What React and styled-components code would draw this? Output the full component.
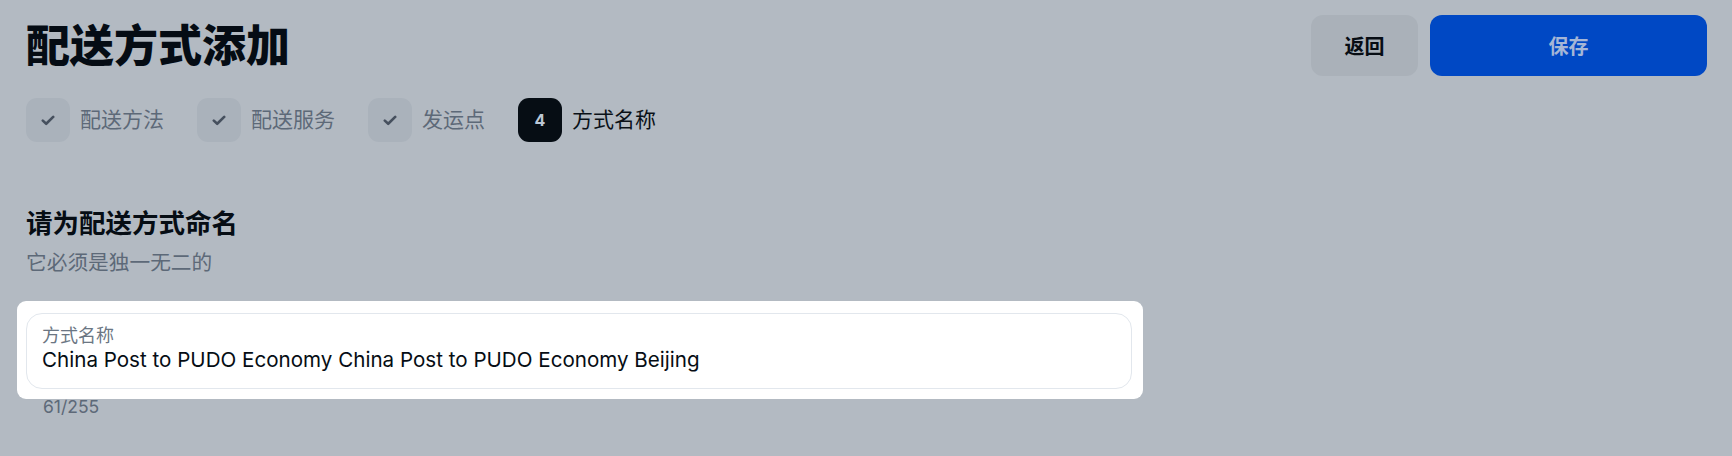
import React, { useState } from "react";
import styled, { createGlobalStyle } from "styled-components";

const GlobalStyle = createGlobalStyle`
    html, body {
        margin: 0;
        padding: 0;
        background: #b3bac2;
    }
    body {
        font-family: "Inter", "Noto Sans CJK SC", sans-serif;
        color: #060d14;
    }
    * {
        box-sizing: border-box;
    }
`;

const Page = styled.div`
    width: 1732px;
    height: 456px;
    padding: 15px 25px 0 26px;
    background: #b3bac2;
    overflow: hidden;
`;

const Header = styled.div`
    display: flex;
    align-items: center;
    justify-content: space-between;
    height: 61px;
`;

const Title = styled.h1`
    margin: 0;
    font-size: 44px;
    line-height: 56px;
    font-weight: 800;
    color: #050c14;
`;

const Actions = styled.div`
    display: flex;
    gap: 12px;
`;

const Button = styled.button`
    height: 61px;
    width: ${(p) => p.$width}px;
    border: none;
    border-radius: 12px;
    font-family: inherit;
    font-size: 20px;
    font-weight: 700;
    cursor: pointer;
    background: ${(p) => (p.$primary ? "#0048c4" : "#aab1b9")};
    color: ${(p) => (p.$primary ? "#a5b6d6" : "#070d14")};
`;

const Steps = styled.div`
    display: flex;
    align-items: center;
    gap: 33px;
    margin-top: 22px;
`;

const Step = styled.div`
    display: flex;
    align-items: center;
    gap: 10px;
`;

const StepBox = styled.div`
    width: 44px;
    height: 44px;
    border-radius: 11px;
    display: flex;
    align-items: center;
    justify-content: center;
    background: ${(p) => (p.$active ? "#060d14" : "#aab2bb")};
    color: #bcc7d6;
    font-size: 16px;
    font-weight: 700;
`;

const StepLabel = styled.span`
    font-size: 21px;
    line-height: 28px;
    color: ${(p) => (p.$active ? "#0a1118" : "#5d6978")};
`;

const Section = styled.div`
    margin-top: 64px;
`;

const Heading = styled.h2`
    margin: 0;
    font-size: 26.5px;
    line-height: 34px;
    font-weight: 700;
    color: #060d14;
`;

const Sub = styled.p`
    margin: 9px 0 0;
    font-size: 20.7px;
    line-height: 28px;
    color: #5d6978;
`;

const Spotlight = styled.div`
    margin: 24px 0 0 -9px;
    width: 1126px;
    padding: 12px 11px 10px 9px;
    background: #ffffff;
    border-radius: 9px;
`;

const Field = styled.label`
    display: block;
    height: 76px;
    padding: 11px 15px 0;
    border: 1.5px solid #e2e7ed;
    border-radius: 16px;
    background: #ffffff;
`;

const FieldLabel = styled.div`
    font-size: 18px;
    line-height: 22px;
    color: #6b7683;
`;

const FieldInput = styled.input`
    display: block;
    width: 100%;
    border: none;
    outline: none;
    padding: 0;
    margin: 1px 0 0;
    font-family: inherit;
    font-size: 20.6px;
    line-height: 24px;
    height: 24px;
    color: #060d14;
    background: transparent;
`;

const Counter = styled.div`
    margin: -2px 0 0 17px;
    font-size: 17.5px;
    line-height: 20px;
    color: #5d6978;
`;

const Check = () => (
    <svg width="14" height="11" viewBox="0 0 14 11" fill="none">
        <path
            d="M1.8 5.6 L5.2 8.8 L12.2 1.9"
            stroke="#46505e"
            strokeWidth="2.6"
            strokeLinecap="round"
            strokeLinejoin="round"
        />
    </svg>
);

const steps = [
    { label: "配送方法", done: true },
    { label: "配送服务", done: true },
    { label: "发运点", done: true },
    { label: "方式名称", done: false },
];

const App = () => {
    const [name, setName] = useState(
        "China Post to PUDO Economy China Post to PUDO Economy Beijing"
    );

    return (
        <>
            <GlobalStyle />
            <Page>
                <Header>
                    <Title>配送方式添加</Title>
                    <Actions>
                        <Button $width={107}>返回</Button>
                        <Button $primary $width={277}>
                            保存
                        </Button>
                    </Actions>
                </Header>

                <Steps>
                    {steps.map((s, i) => (
                        <Step key={s.label}>
                            <StepBox $active={!s.done}>
                                {s.done ? <Check /> : i + 1}
                            </StepBox>
                            <StepLabel $active={!s.done}>{s.label}</StepLabel>
                        </Step>
                    ))}
                </Steps>

                <Section>
                    <Heading>请为配送方式命名</Heading>
                    <Sub>它必须是独一无二的</Sub>
                </Section>

                <Spotlight>
                    <Field>
                        <FieldLabel>方式名称</FieldLabel>
                        <FieldInput
                            type="text"
                            value={name}
                            onChange={(e) => setName(e.target.value)}
                        />
                    </Field>
                </Spotlight>
                <Counter>{name.length}/255</Counter>
            </Page>
        </>
    );
};

export default App;
